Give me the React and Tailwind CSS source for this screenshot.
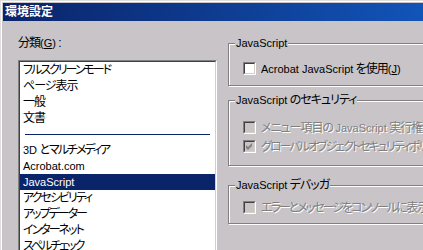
import React from 'react';

const face = 'bg-[#c8c4c8]';

function En({ children }) {
  return <span className="text-[11px] tracking-normal">{children}</span>;
}

// katakana-heavy runs are set tighter, like the bitmap UI font
function Kana({ children }) {
  return <span className="tracking-[-2px]">{children}</span>;
}

function Check({ checked, disabled }) {
  return (
    <span className="block w-[13px] h-[13px] shrink-0 border border-t-[#808080] border-l-[#808080] border-b-white border-r-white">
      <span
        className={
          disabled
            ? 'block w-full h-full border border-t-[#404040] border-l-[#404040] border-b-[#d4d0c8] border-r-[#d4d0c8] bg-[#c8c4c8]'
            : 'block w-full h-full border border-t-[#404040] border-l-[#404040] border-b-[#d4d0c8] border-r-[#d4d0c8] bg-white'
        }
      >
        {checked && (
          <svg width="9" height="9" viewBox="0 0 9 9" className="block">
            <path d="M1 3 L3 5 L7 1 L7 4 L3 8 L1 6 Z" fill={disabled ? '#808080' : '#000'} />
          </svg>
        )}
      </span>
    </span>
  );
}

function Group({ title, className, children }) {
  return (
    <div className={`relative w-[240px] border border-[#808080] shadow-[inset_1px_1px_0_#fff,1px_1px_0_#fff] ${className}`}>
      <span className="absolute -top-[8px] left-[6px] px-[1px] bg-[#c8c4c8] leading-[14px] whitespace-nowrap">{title}</span>
      {children}
    </div>
  );
}

function Row({ checked, disabled, children }) {
  return (
    <div className="flex items-center gap-[5px] h-[13px] whitespace-nowrap">
      <Check checked={checked} disabled={disabled} />
      <span className={disabled ? 'text-[#808080] [text-shadow:1px_1px_0_#fff]' : ''}>{children}</span>
    </div>
  );
}

export default function App() {
  const rows = [
    <Kana>フルスクリーンモード</Kana>,
    'ページ表示',
    '一般',
    '文書',
    'sep',
    <>
      <En>3D</En> と<Kana>マルチメディア</Kana>
    </>,
    <En>Acrobat.com</En>,
    'sel',
    <Kana>アクセシビリティ</Kana>,
    <Kana>アップデーター</Kana>,
    <Kana>インターネット</Kana>,
    <Kana>スペルチェック</Kana>,
    '信頼性管理マネージャ',
  ];

  return (
    <div
      className={`w-[423px] h-[250px] overflow-hidden ${face} pt-[3px] pl-[3px] shadow-[inset_1px_1px_0_#dfdfdf,inset_2px_2px_0_#fff] text-black text-[12px] tracking-[-1px] font-['Liberation_Sans','Noto_Sans_CJK_JP',sans-serif] [font-feature-settings:'palt']`}
    >
      {/* Title bar */}
      <div className="h-[18px] w-[460px] bg-gradient-to-r from-[#0a246a] to-[#1259c0] flex items-center pl-[2px]">
        <span className="text-white font-bold text-[12px] leading-[18px] tracking-normal">環境設定</span>
      </div>

      <div className="flex">
        {/* Category list */}
        <div className="ml-[15px] shrink-0">
          <div className="mt-[16px] h-[13px] leading-[13px]">
            分類<En>(<span className="underline">G</span>)</En> :
          </div>
          <div className="mt-[10px] w-[199px] h-[200px] border border-t-[#808080] border-l-[#808080] border-b-white border-r-white">
            <div className="h-full border border-t-[#404040] border-l-[#404040] border-b-[#d4d0c8] border-r-[#d4d0c8] bg-white overflow-hidden">
              {rows.map((r, i) => {
                if (r === 'sep')
                  return (
                    <div key={i} className="h-[16px] flex items-center px-[5px]">
                      <div className="h-px w-full bg-[#0a246a]" />
                    </div>
                  );
                if (r === 'sel')
                  return (
                    <div key={i} className="h-[16px] leading-[16px] pl-[3px] bg-[#0a246a] text-white">
                      <En>JavaScript</En>
                    </div>
                  );
                return (
                  <div key={i} className="h-[16px] leading-[16px] pl-[3px] whitespace-nowrap">
                    {r}
                  </div>
                );
              })}
            </div>
          </div>
        </div>

        {/* Options */}
        <div className="ml-[11px] shrink-0">
          <Group title={<En>JavaScript</En>} className="mt-[22px] h-[43px] pt-[18px] pl-[14px]">
            <Row>
              <En>Acrobat JavaScript</En> を使用<En>(<span className="underline">J</span>)</En>
            </Row>
          </Group>

          <Group
            title={
              <>
                <En>JavaScript</En> のセキュリティ
              </>
            }
            className="mt-[14px] h-[66px] pt-[20px] pl-[14px] flex flex-col gap-[6px]"
          >
            <Row disabled>
              メニュー項目の <En>JavaScript</En> 実行権限を有効にする
            </Row>
            <Row checked disabled>
              <Kana>グローバルオブジェクトセキュリティポリシー</Kana>を有効にする
            </Row>
          </Group>

          <Group
            title={
              <>
                <En>JavaScript</En> デバッガ
              </>
            }
            className="mt-[19px] h-[39px] pt-[15px] pl-[14px]"
          >
            <Row disabled>
              <Kana>エラーとメッセージをコンソール</Kana>に表示
            </Row>
          </Group>
        </div>
      </div>
    </div>
  );
}
